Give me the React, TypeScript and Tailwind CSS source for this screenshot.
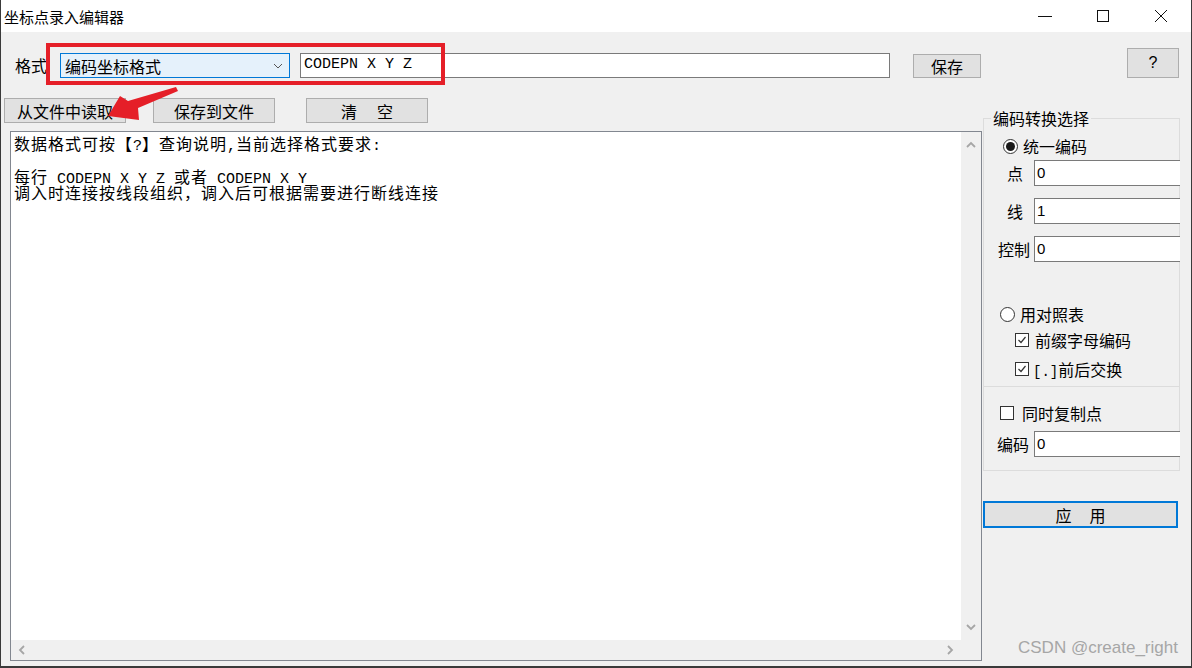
import React from "react";

function Mixed({ text, latin = "text-[15px]" }: { text: string; latin?: string }) {
  const parts = text.match(/[\x20-\x7e]+|[^\x20-\x7e]+/g) ?? [];
  return (
    <>
      {parts.map((p, i) =>
        /^[\x20-\x7e]+$/.test(p) ? (
          <span key={i} className={"font-['Liberation_Mono'] whitespace-pre leading-[12px] tracking-normal " + latin}>
            {p}
          </span>
        ) : (
          <span key={i} className="leading-[15px]">
            {p}
          </span>
        )
      )}
    </>
  );
}

function Btn({ className = "", children }: { className?: string; children: React.ReactNode }) {
  return (
    <div
      className={
        "flex items-center justify-center bg-[#e1e1e1] border border-[#adadad] text-[16px] leading-none text-black " +
        className
      }
    >
      {children}
    </div>
  );
}

function Field({ value }: { value: string }) {
  return (
    <div className="h-[26px] w-[146px] -mr-[1px] bg-white border border-r-0 border-[#7a7a7a] flex items-center pl-[2px] text-[15px] font-['Liberation_Sans'] text-black">
      {value}
    </div>
  );
}

function Radio({ checked }: { checked?: boolean }) {
  return (
    <div className="w-[15px] h-[15px] rounded-full border border-[#333] bg-white flex items-center justify-center">
      {checked && <div className="w-[9px] h-[9px] rounded-full bg-[#1a1a1a]" />}
    </div>
  );
}

function Check({ checked }: { checked?: boolean }) {
  return (
    <div className="w-[14px] h-[14px] border border-[#333] bg-white flex items-center justify-center">
      {checked && (
        <svg width="10" height="10" viewBox="0 0 10 10">
          <polyline points="1.5,5 4,7.5 8.5,2" fill="none" stroke="#333" strokeWidth="1.2" />
        </svg>
      )}
    </div>
  );
}

function Chevron({ dir }: { dir: "up" | "down" | "left" | "right" }) {
  const pts = {
    up: "1,7 5,3 9,7",
    down: "1,3 5,7 9,3",
    left: "7,1 3,5 7,9",
    right: "3,1 7,5 3,9",
  }[dir];
  return (
    <svg width="10" height="10" viewBox="0 0 10 10">
      <polyline points={pts} fill="none" stroke="#a6a6a6" strokeWidth="1.8" />
    </svg>
  );
}

function Line({ text }: { text: string }) {
  return (
    <div className="h-[16px] flex items-baseline whitespace-pre">
      <Mixed text={text} />
    </div>
  );
}

export default function App() {
  return (
    <div className="relative w-[1192px] h-[668px] overflow-hidden bg-[#f0f0f0] border-l border-r border-b-2 border-[#3a3a3a] font-['Noto_Sans_CJK_SC',sans-serif] flex flex-col">
      {/* title bar */}
      <div className="h-[32px] bg-white flex items-center shrink-0">
        <span className="pl-[3px] text-[15px] text-black leading-none">坐标点录入编辑器</span>
        <div className="ml-auto flex items-center h-full">
          <div className="w-[58px] h-full flex items-center justify-center">
            <svg width="14" height="14" viewBox="0 0 14 14">
              <line x1="0" y1="7.5" x2="14" y2="7.5" stroke="#111" strokeWidth="1" />
            </svg>
          </div>
          <div className="w-[58px] h-full flex items-center justify-center">
            <svg width="14" height="14" viewBox="0 0 14 14">
              <rect x="1.5" y="1.5" width="11" height="11" fill="none" stroke="#111" strokeWidth="1" />
            </svg>
          </div>
          <div className="w-[58px] h-full flex items-center justify-center mr-[1px]">
            <svg width="14" height="14" viewBox="0 0 14 14">
              <line x1="1" y1="1" x2="13" y2="13" stroke="#111" strokeWidth="1" />
              <line x1="13" y1="1" x2="1" y2="13" stroke="#111" strokeWidth="1" />
            </svg>
          </div>
        </div>
      </div>

      {/* format row */}
      <div className="flex items-start mt-[16px] pl-[14px] h-[30px] shrink-0">
        <span className="mt-[5px] w-[45px] leading-[25px] text-[16px] text-black">格式</span>
        <div className="mt-[5px] w-[230px] h-[25px] bg-[#e5f1fb] border border-[#0078d7] flex items-center pl-[4px] pr-[6px] text-[16px] text-black">
          <span>编码坐标格式</span>
          <svg className="ml-auto" width="10" height="6" viewBox="0 0 10 6">
            <polyline points="1,1 5,5 9,1" fill="none" stroke="#555" strokeWidth="1" />
          </svg>
        </div>
        <div className="mt-[5px] ml-[10px] w-[590px] h-[25px] bg-white border border-[#7a7a7a] flex items-center pl-[3px] font-['Liberation_Mono'] text-[15px] whitespace-pre text-black">
          CODEPN X Y Z
        </div>
        <Btn className="mt-[6px] ml-[23px] w-[68px] h-[24px]">保存</Btn>
        <Btn className="ml-auto mr-[12px] w-[52px] h-[30px] text-[14px] font-['Liberation_Sans']">?</Btn>
      </div>

      {/* body */}
      <div className="flex mt-[20px] flex-1 min-h-0">
        <div className="w-[981px] flex flex-col">
          <div className="flex pl-[3px]">
            <Btn className="w-[122px] h-[25px]">从文件中读取</Btn>
            <Btn className="ml-[27px] w-[122px] h-[25px]">保存到文件</Btn>
            <Btn className="ml-[31px] w-[122px] h-[25px] gap-[20px]">
              <span>清</span>
              <span>空</span>
            </Btn>
          </div>
          <div className="mt-[8px] ml-[9px] w-[972px] h-[530px] border border-[#828790] flex flex-col">
            <div className="flex flex-1 min-h-0">
              <div className="flex-1 bg-white pl-[3px] pt-[4px] text-[16px] tracking-[1px] text-black">
                <Line text="数据格式可按【?】查询说明,当前选择格式要求:" />
                <div className="h-[17px]" />
                <Line text="每行 CODEPN X Y Z 或者 CODEPN X Y" />
                <Line text="调入时连接按线段组织，调入后可根据需要进行断线连接" />
              </div>
              <div className="w-[20px] bg-[#f0f0f0] flex flex-col items-center justify-between py-[8px]">
                <Chevron dir="up" />
                <Chevron dir="down" />
              </div>
            </div>
            <div className="h-[20px] flex">
              <div className="flex-1 bg-[#f0f0f0] flex items-center justify-between px-[6px]">
                <Chevron dir="left" />
                <Chevron dir="right" />
              </div>
              <div className="w-[20px] bg-[#f0f0f0]" />
            </div>
          </div>
        </div>

        {/* right panel */}
        <div className="ml-[1px] w-[197px] flex flex-col">
          <fieldset className="mt-[10px] border border-[#dcdcdc] p-0 m-0 min-w-0">
            <legend className="ml-[7px] px-[2px] text-[16px] leading-[20px] text-black">编码转换选择</legend>
            <div className="flex items-center h-[20px] mt-[8px] pl-[19px] text-[16px] text-black">
              <Radio checked />
              <span className="ml-[5px]">统一编码</span>
            </div>
            <div className="flex items-center mt-[4px]">
              <span className="w-[50px] pl-[23px] text-[16px] text-black">点</span>
              <Field value="0" />
            </div>
            <div className="flex items-center mt-[12px]">
              <span className="w-[50px] pl-[23px] text-[16px] text-black">线</span>
              <Field value="1" />
            </div>
            <div className="flex items-center mt-[12px]">
              <span className="w-[50px] pl-[14px] text-[16px] text-black whitespace-nowrap">控制</span>
              <Field value="0" />
            </div>
            <div className="flex items-center h-[20px] mt-[42px] pl-[16px] text-[16px] text-black">
              <Radio />
              <span className="ml-[5px]">用对照表</span>
            </div>
            <div className="flex items-center h-[20px] mt-[6px] pl-[31px] text-[16px] text-black">
              <Check checked />
              <span className="ml-[6px]">前缀字母编码</span>
            </div>
            <div className="flex items-center h-[20px] mt-[9px] pl-[31px] text-[16px] text-black">
              <Check checked />
              <span className="ml-[4px] flex items-baseline">
                <Mixed text="[.]" latin="text-[14px]" />
                <span>前后交换</span>
              </span>
            </div>
            <div className="mt-[7px] border-t border-[#dcdcdc]" />
            <div className="flex items-center h-[20px] mt-[16px] pl-[16px] text-[16px] text-black">
              <Check />
              <span className="ml-[8px]">同时复制点</span>
            </div>
            <div className="flex items-center mt-[8px] mb-[13px]">
              <span className="w-[50px] pl-[13px] text-[16px] text-black whitespace-nowrap">编码</span>
              <Field value="0" />
            </div>
          </fieldset>
          <div className="mt-[30px] w-[195px] h-[27px] bg-[#e1e1e1] border-2 border-[#0078d7] flex items-center justify-center gap-[18px] text-[16px] text-black">
            <span>应</span>
            <span>用</span>
          </div>
        </div>
      </div>

      {/* annotation overlays */}
      <div className="absolute left-[45px] top-[43px] w-[399px] h-[42px] border-[4px] border-[#e51f28]" />
      <svg className="absolute left-[100px] top-[84px]" width="80" height="40" viewBox="100 84 80 40">
        <polygon
          points="107,116 119,96 127,101 175,87 177,91 137,108 138,120"
          fill="#e51f28"
        />
      </svg>
      <span className="absolute left-[1017px] top-[637px] text-[17px] leading-[22px] text-[#a6a6a6] font-['Liberation_Sans']">
        CSDN @create_right
      </span>
    </div>
  );
}
